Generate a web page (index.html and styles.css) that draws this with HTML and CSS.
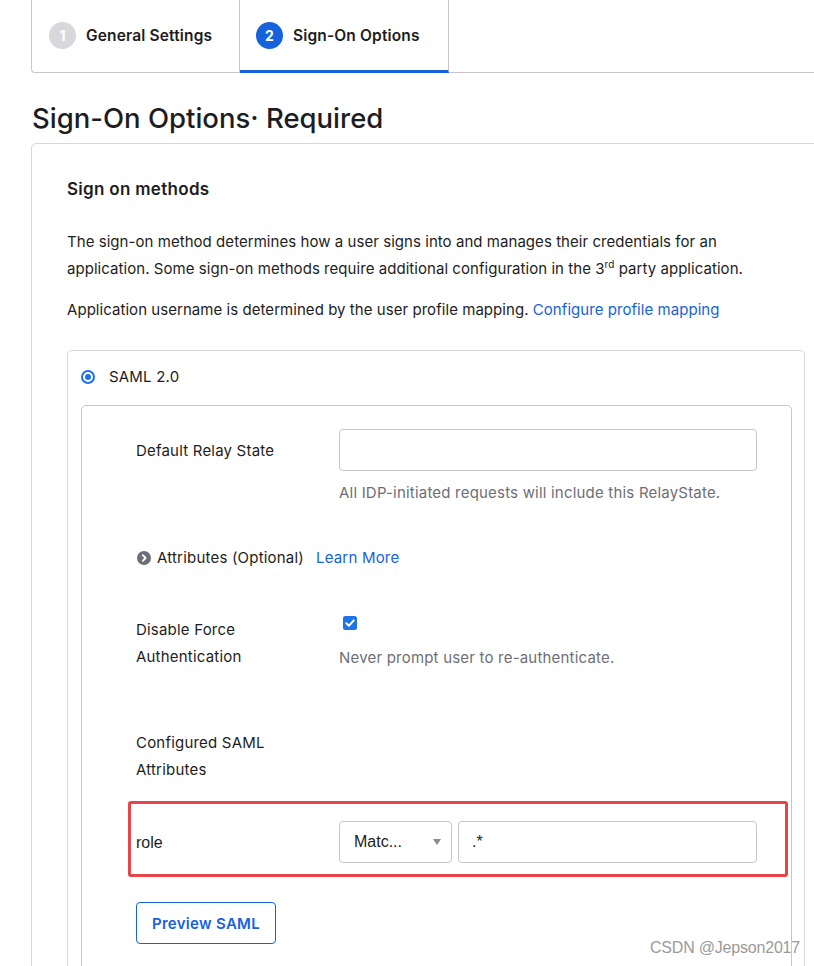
FILE: index.html
```html
<!DOCTYPE html>
<html>
<head>
<meta charset="utf-8">
<link rel="stylesheet" href="styles.css">
</head>
<body>
<div class="page">
  <nav class="tabs">
    <div class="tab"><span class="num num-idle">1</span><span>General Settings</span></div>
    <div class="tab tab-active"><span class="num num-active">2</span><span>Sign-On Options</span></div>
    <div class="tab-rest"></div>
  </nav>

  <h1 class="title">Sign-On Options· Required</h1>

  <section class="card">
    <h2 class="card-title">Sign on methods</h2>
    <p class="text text-first">The sign-on method determines how a user signs into and manages their credentials for an application. Some sign-on methods require additional configuration in the 3<sup>rd</sup> party application.</p>
    <p class="text text-second">Application username is determined by the user profile mapping. <a class="link">Configure profile mapping</a></p>

    <div class="method">
      <div class="radio-row">
        <span class="radio"><span class="radio-dot"></span></span>
        <span>SAML 2.0</span>
      </div>

      <div class="saml">
        <div class="row row-relay">
          <div class="label label-center">Default Relay State</div>
          <div class="field">
            <div class="input"></div>
            <div class="hint hint-relay">All IDP-initiated requests will include this RelayState.</div>
          </div>
        </div>

        <div class="row row-attrs">
          <span class="chev">
            <svg width="14" height="14" viewBox="0 0 14 14"><circle cx="7" cy="7" r="7" fill="#6e6e78"/><path d="M5.8 4.2 L8.6 7 L5.8 9.8" fill="none" stroke="#fff" stroke-width="1.8" stroke-linecap="round" stroke-linejoin="round"/></svg>
          </span>
          <span class="attrs-text">Attributes (Optional)</span>
          <a class="link">Learn More</a>
        </div>

        <div class="row row-force">
          <div class="label">Disable Force Authentication</div>
          <div class="field">
            <span class="checkbox">
              <svg width="14" height="14" viewBox="0 0 14 14"><rect x="0" y="0" width="14" height="14" rx="2.5" fill="#1a73e8"/><path d="M3.3 7.2 L5.9 9.7 L10.8 4.4" fill="none" stroke="#fff" stroke-width="2" stroke-linecap="round" stroke-linejoin="round"/></svg>
            </span>
            <div class="hint hint-force">Never prompt user to re-authenticate.</div>
          </div>
        </div>

        <div class="row row-configured">
          <div class="label">Configured SAML Attributes</div>
        </div>

        <div class="highlight">
          <div class="attr-row">
            <div class="attr-name">role</div>
            <div class="select"><span>Matc...</span><span class="caret"></span></div>
            <div class="input attr-value">.*</div>
          </div>
        </div>

        <button class="btn">Preview SAML</button>
      </div>
    </div>
  </section>

  <div class="watermark">CSDN @Jepson2017</div>
</div>
</body>
</html>
```

FILE: styles.css
```css
html, body {
  margin: 0;
  padding: 0;
  overflow: hidden;
  background: #ffffff;
}

.page {
  width: 814px;
  height: 966px;
  position: relative;
  overflow: hidden;
  font-family: Inter, "Noto Sans", sans-serif;
  color: #1d1d21;
  font-size: 15px;
  letter-spacing: 0.2px;
}

/* Tabs */
.tabs {
  display: flex;
  height: 72px;
  margin-left: 31px;
  border-left: 1px solid #c6c6cc;
  border-bottom: 1px solid #c6c6cc;
  border-bottom-left-radius: 4px;
}

.tab {
  display: flex;
  align-items: center;
  gap: 10px;
  font-size: 15.5px;
  letter-spacing: 0.15px;
  font-weight: 600;
  color: #1d1d21;
  border-right: 1px solid #c6c6cc;
  box-sizing: border-box;
  padding-bottom: 2px;
}

.tab:first-child {
  width: 208px;
  padding-left: 17px;
}

.tab-active {
  width: 209px;
  padding-left: 16px;
  border-bottom: 3px solid #1662dd;
  margin-bottom: -1px;
  padding-bottom: 0;
}

.tab-rest {
  flex: 1;
}

.num {
  width: 27px;
  height: 27px;
  border-radius: 50%;
  display: inline-flex;
  align-items: center;
  justify-content: center;
  color: #ffffff;
  font-size: 14px;
  font-weight: 700;
  letter-spacing: 0;
}

.num-idle { background: #d7d7dc; }
.num-active { background: #1662dd; }

/* Title */
.title {
  margin: 29px 0 9px 32px;
  font-size: 27.5px;
  line-height: 32px;
  font-weight: 500;
  letter-spacing: 0;
}

/* Card */
.card {
  margin-left: 31px;
  width: 820px;
  height: 900px;
  box-sizing: border-box;
  border: 1px solid #d7d7dc;
  border-radius: 5px;
  padding: 33px 0 0 35px;
}

.card-title {
  margin: 0;
  font-size: 17px;
  letter-spacing: 0.3px;
  line-height: 24px;
  font-weight: 600;
}

.text {
  margin: 0;
  line-height: 27px;
  width: 720px;
  letter-spacing: 0.05px;
}

.text-first { margin-top: 27px; }
.text-second { margin-top: 14px; }

.text sup {
  font-size: 10px;
  line-height: 0;
  vertical-align: 6px;
}

.link {
  color: #1662dd;
  text-decoration: none;
}

/* Method box */
.method {
  margin-top: 27px;
  width: 738px;
  height: 700px;
  box-sizing: border-box;
  border: 1px solid #d7d7dc;
  border-radius: 5px;
  padding: 14px 12px 0 13px;
}

.radio-row {
  display: flex;
  align-items: center;
  gap: 14px;
  line-height: 24px;
}

.radio {
  width: 14px;
  height: 14px;
  box-sizing: border-box;
  border: 2px solid #1a73e8;
  border-radius: 50%;
  display: inline-flex;
  align-items: center;
  justify-content: center;
}

.radio-dot {
  width: 6px;
  height: 6px;
  border-radius: 50%;
  background: #1a73e8;
}

.saml {
  margin-top: 16px;
  height: 640px;
  box-sizing: border-box;
  border: 1px solid #c6c6cc;
  border-radius: 5px;
  padding: 23px 34px 0 54px;
}

.row {
  display: flex;
}

.label {
  width: 170px;
  margin-right: 33px;
  line-height: 27px;
}

.label-center {
  line-height: 42px;
  padding-top: 1px;
}

.field {
  flex: 1;
  display: flex;
  flex-direction: column;
}

.input {
  height: 42px;
  box-sizing: border-box;
  border: 1px solid #c6c6cc;
  border-radius: 4px;
}

.hint {
  color: #6e6e78;
  line-height: 24px;
}

.hint-relay { margin-top: 10px; }

.row-attrs {
  margin-top: 41px;
  align-items: center;
  line-height: 24px;
  padding-left: 1px;
}

.chev {
  display: inline-flex;
  margin-right: 6px;
}

.attrs-text {
  margin-right: 12px;
}

.row-force {
  margin-top: 46px;
}

.checkbox {
  display: inline-flex;
  width: 14px;
  height: 14px;
  margin-left: 4px;
}

.hint-force {
  margin-top: 16px;
}

.row-configured {
  margin-top: 59px;
}

/* Highlighted row */
.highlight {
  margin: 18px -31px 0 -8px;
  border: 3px solid #e8454b;
  border-radius: 3px;
  padding: 17px 28px 11px 5px;
}

.attr-row {
  display: flex;
  align-items: center;
  font-family: "Liberation Sans", Arial, sans-serif;
  font-size: 16px;
  letter-spacing: 0;
}

.attr-name {
  width: 203px;
  padding-top: 2px;
}

.select {
  width: 113px;
  height: 42px;
  box-sizing: border-box;
  border: 1px solid #c6c6cc;
  border-radius: 4px;
  display: flex;
  align-items: center;
  justify-content: space-between;
  padding: 0 10px 0 14px;
  margin-right: 6px;
}

.caret {
  width: 0;
  height: 0;
  border-left: 4px solid transparent;
  border-right: 4px solid transparent;
  border-top: 6px solid #8a8a92;
}

.attr-value {
  flex: 1;
  display: flex;
  align-items: center;
  padding-left: 13px;
}

.btn {
  margin-top: 25px;
  width: 140px;
  height: 42px;
  background: #ffffff;
  border: 1px solid #1662dd;
  border-radius: 4px;
  color: #1662dd;
  font-family: Inter, "Noto Sans", sans-serif;
  font-size: 15px;
  letter-spacing: 0.3px;
  font-weight: 600;
  padding: 0;
}

.watermark {
  position: absolute;
  right: 14px;
  top: 939px;
  font-family: "Liberation Sans", Arial, sans-serif;
  font-size: 16px;
  color: #9a9a9a;
  letter-spacing: -0.2px;
}
```
